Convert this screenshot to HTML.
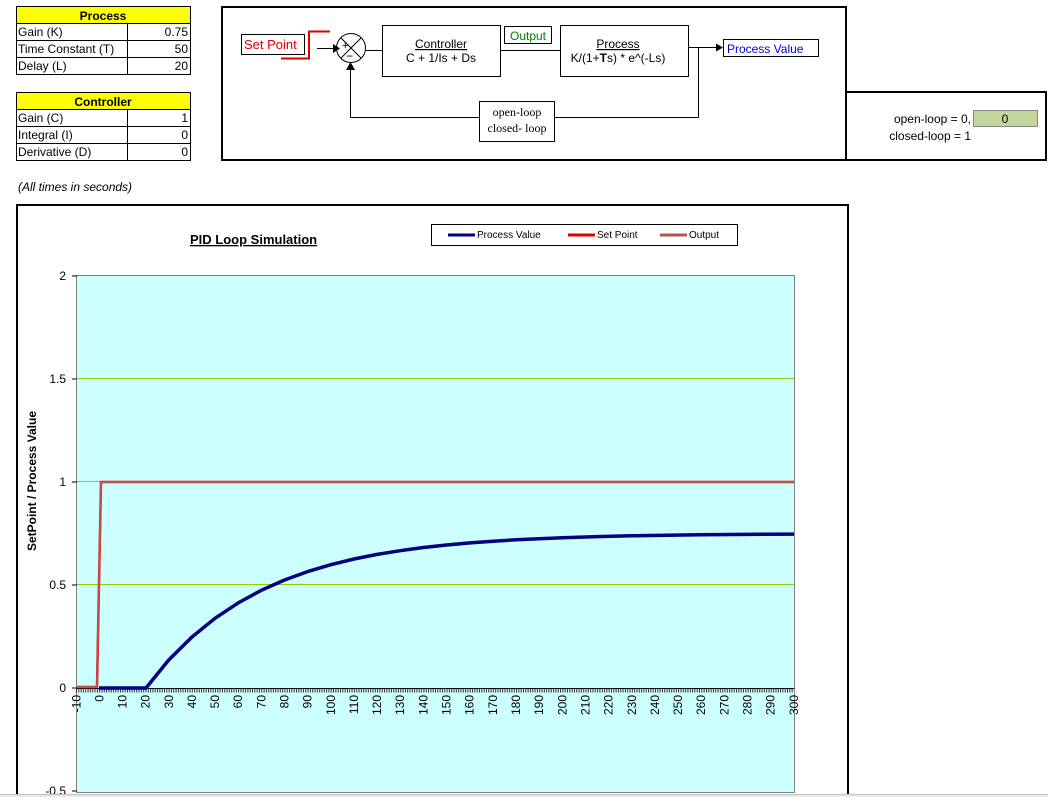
<!DOCTYPE html>
<html><head><meta charset="utf-8"><style>
body{margin:0;background:#fff;width:1048px;height:797px;overflow:hidden;font-family:"Liberation Sans",Arial,sans-serif}
svg text{font-family:"Liberation Sans",Arial,sans-serif}
</style></head><body>
<svg width="1048" height="797" viewBox="0 0 1048 797" xmlns="http://www.w3.org/2000/svg">
<!-- Process table -->
<rect x="16.5" y="6.5" width="174" height="17" fill="#ffff00" stroke="#000"/>
<text x="103" y="20" font-size="12" font-weight="bold" text-anchor="middle">Process</text>
<g stroke="#000" fill="none">
<rect x="16.5" y="23.5" width="174" height="51"/>
<line x1="16" y1="40.5" x2="191" y2="40.5"/><line x1="16" y1="57.5" x2="191" y2="57.5"/>
<line x1="127.5" y1="23" x2="127.5" y2="75"/>
</g>
<g font-size="12">
<text x="18" y="36">Gain (K)</text><text x="188" y="36" text-anchor="end">0.75</text>
<text x="18" y="53">Time Constant (T)</text><text x="188" y="53" text-anchor="end">50</text>
<text x="18" y="70">Delay (L)</text><text x="188" y="70" text-anchor="end">20</text>
</g>
<!-- Controller table -->
<rect x="16.5" y="92.5" width="174" height="17" fill="#ffff00" stroke="#000"/>
<text x="103" y="106" font-size="12" font-weight="bold" text-anchor="middle">Controller</text>
<g stroke="#000" fill="none">
<rect x="16.5" y="109.5" width="174" height="51"/>
<line x1="16" y1="126.5" x2="191" y2="126.5"/><line x1="16" y1="143.5" x2="191" y2="143.5"/>
<line x1="127.5" y1="109" x2="127.5" y2="161"/>
</g>
<g font-size="12">
<text x="18" y="122">Gain (C)</text><text x="188" y="122" text-anchor="end">1</text>
<text x="18" y="139">Integral (I)</text><text x="188" y="139" text-anchor="end">0</text>
<text x="18" y="156">Derivative (D)</text><text x="188" y="156" text-anchor="end">0</text>
</g>
<text x="18" y="191" font-size="12" font-style="italic">(All times in seconds)</text>

<!-- Diagram -->
<rect x="222" y="7" width="624" height="153" fill="none" stroke="#000" stroke-width="2"/>
<rect x="846" y="92" width="200" height="68" fill="none" stroke="#000" stroke-width="2"/>
<rect x="973.5" y="110.5" width="64" height="16" fill="#c3d69b" stroke="#888"/>
<text x="1005" y="123" font-size="12" text-anchor="middle">0</text>
<text x="971" y="123" font-size="12" text-anchor="end">open-loop = 0,</text>
<text x="971" y="140" font-size="12" text-anchor="end">closed-loop = 1</text>

<rect x="241.5" y="34.5" width="63" height="20" fill="#fff" stroke="#000"/>
<text x="244" y="49" font-size="13" fill="#e00000">Set Point</text>
<polyline points="281,58.5 309,58.5 309,31.5 330,31.5" fill="none" stroke="#e00000" stroke-width="2"/>
<g stroke="#000" fill="none">
<line x1="317" y1="48.5" x2="333" y2="48.5"/>
<circle cx="351" cy="48" r="14.5" fill="#fff"/>
<line x1="341" y1="38" x2="361" y2="58"/><line x1="361" y1="38" x2="341" y2="58"/>
<line x1="366" y1="50.5" x2="382" y2="50.5"/>
<rect x="382.5" y="25.5" width="118" height="51" fill="#fff"/>
<line x1="500" y1="50.5" x2="560" y2="50.5"/>
<rect x="560.5" y="25.5" width="128" height="51" fill="#fff"/>
<line x1="688" y1="47.5" x2="716" y2="47.5"/>
<line x1="698.5" y1="47" x2="698.5" y2="117.5"/>
<line x1="698.5" y1="117.5" x2="555" y2="117.5"/>
<line x1="479" y1="117.5" x2="350.5" y2="117.5"/>
<line x1="350.5" y1="117.5" x2="350.5" y2="70"/>
</g>
<polygon points="333,44 340,48.5 333,53" fill="#000"/>
<polygon points="346,70 350.5,62 355,70" fill="#000"/>
<polygon points="716,43.5 723,47.5 716,51.5" fill="#000"/>
<text x="342" y="49" font-size="11">+</text>
<text x="346" y="60" font-size="12">−</text>
<text x="441" y="48" font-size="12" text-anchor="middle" text-decoration="underline">Controller</text>
<text x="441" y="62" font-size="12" text-anchor="middle">C + 1/Is + Ds</text>
<rect x="504.5" y="26.5" width="47" height="17" fill="#fff" stroke="#000"/>
<text x="528" y="40" font-size="12" fill="#008000" text-anchor="middle">Output</text>
<text x="618" y="48" font-size="12" text-anchor="middle" text-decoration="underline">Process</text>
<text x="618" y="62" font-size="12" text-anchor="middle">K/(1+<tspan font-weight="bold">T</tspan>s) * e^(-Ls)</text>
<rect x="723.5" y="39.5" width="95" height="17" fill="#fff" stroke="#000"/>
<text x="727" y="53" font-size="12" fill="#0000cc">Process Value</text>
<rect x="479.5" y="101.5" width="75" height="40" fill="#fff" stroke="#000"/>
<text x="517" y="116" font-size="12" text-anchor="middle" font-family="Liberation Serif" style="font-family:'Liberation Serif',serif">open-loop</text>
<text x="517" y="132" font-size="12" text-anchor="middle" style="font-family:'Liberation Serif',serif">closed- loop</text>

<!-- Chart -->
<rect x="17" y="205" width="831" height="600" fill="#fff" stroke="#000" stroke-width="2"/>
<text x="190" y="244" font-size="13" font-weight="bold" text-decoration="underline">PID Loop Simulation</text>
<rect x="431.5" y="224.5" width="306" height="21" fill="#fff" stroke="#000"/>
<line x1="448" y1="235" x2="475" y2="235" stroke="#000080" stroke-width="3"/>
<text x="477" y="238" font-size="10">Process Value</text>
<line x1="568" y1="235" x2="595" y2="235" stroke="#e00000" stroke-width="3"/>
<text x="597" y="238" font-size="10">Set Point</text>
<line x1="660" y1="235" x2="687" y2="235" stroke="#c0504d" stroke-width="3"/>
<text x="689" y="238" font-size="10">Output</text>

<rect x="76.5" y="275.5" width="718" height="517" fill="#ccffff" stroke="#808080"/>
<g stroke="#99cc00">
<line x1="77" y1="378.5" x2="794" y2="378.5"/>
<line x1="77" y1="481.5" x2="794" y2="481.5"/>
<line x1="77" y1="584.5" x2="794" y2="584.5"/>
</g>
<g stroke="#000">
<line x1="72" y1="276" x2="77" y2="276"/><line x1="72" y1="379" x2="77" y2="379"/>
<line x1="72" y1="482" x2="77" y2="482"/><line x1="72" y1="585" x2="77" y2="585"/>
<line x1="72" y1="688" x2="77" y2="688"/><line x1="72" y1="791" x2="77" y2="791"/>
<line x1="76" y1="688.5" x2="794" y2="688.5"/>
<line x1="76" y1="690.5" x2="794" y2="690.5" stroke-width="4" stroke-dasharray="1 1.316" stroke="#333"/>
</g>
<g font-size="12" text-anchor="end">
<text x="66" y="280">2</text><text x="66" y="383">1.5</text><text x="66" y="486">1</text>
<text x="66" y="589">0.5</text><text x="66" y="692">0</text><text x="66" y="795">-0.5</text>
</g>
<text transform="translate(36,481) rotate(-90)" font-size="12" font-weight="bold" text-anchor="middle">SetPoint / Process Value</text>
<g font-size="12" text-anchor="end" id="xl">
<text transform="translate(80.5,695) rotate(-90)">-10</text>
<text transform="translate(103.5,695) rotate(-90)">0</text>
<text transform="translate(126.5,695) rotate(-90)">10</text>
<text transform="translate(149.5,695) rotate(-90)">20</text>
<text transform="translate(173,695) rotate(-90)">30</text>
<text transform="translate(196,695) rotate(-90)">40</text>
<text transform="translate(219,695) rotate(-90)">50</text>
<text transform="translate(242,695) rotate(-90)">60</text>
<text transform="translate(265.5,695) rotate(-90)">70</text>
<text transform="translate(288.5,695) rotate(-90)">80</text>
<text transform="translate(311.5,695) rotate(-90)">90</text>
<text transform="translate(335,695) rotate(-90)">100</text>
<text transform="translate(358,695) rotate(-90)">110</text>
<text transform="translate(381,695) rotate(-90)">120</text>
<text transform="translate(404,695) rotate(-90)">130</text>
<text transform="translate(427.5,695) rotate(-90)">140</text>
<text transform="translate(450.5,695) rotate(-90)">150</text>
<text transform="translate(473.5,695) rotate(-90)">160</text>
<text transform="translate(497,695) rotate(-90)">170</text>
<text transform="translate(520,695) rotate(-90)">180</text>
<text transform="translate(543,695) rotate(-90)">190</text>
<text transform="translate(566.5,695) rotate(-90)">200</text>
<text transform="translate(589.5,695) rotate(-90)">210</text>
<text transform="translate(612.5,695) rotate(-90)">220</text>
<text transform="translate(636,695) rotate(-90)">230</text>
<text transform="translate(659,695) rotate(-90)">240</text>
<text transform="translate(682,695) rotate(-90)">250</text>
<text transform="translate(705,695) rotate(-90)">260</text>
<text transform="translate(728.5,695) rotate(-90)">270</text>
<text transform="translate(751.5,695) rotate(-90)">280</text>
<text transform="translate(774.5,695) rotate(-90)">290</text>
<text transform="translate(798,695) rotate(-90)">300</text>
</g>
<!-- series -->
<polyline points="77,687 97,687 101,482 794,482" fill="none" stroke="#e00000" stroke-width="2.5"/>
<polyline points="77,687 97,687 101,482 794,482" fill="none" stroke="#c0504d" stroke-width="2"/>
<polyline points="99,688 146,688 168.7,660 191.8,637.1 215,618.3 238.2,602.9 261.3,590.3 284.5,580 307.6,571.6 330.8,564.7 354,559 377.1,554.4 400.3,550.7 423.4,547.5 446.6,545 469.8,542.9 493,541.2 516.1,539.8 539.2,538.7 562.4,537.7 597,536.6 631.9,535.8 666.6,535.2 701.4,534.8 747.7,534.4 794,534.1" fill="none" stroke="#000080" stroke-width="3.5" stroke-linejoin="round"/>
<!-- bottom strip -->
<rect x="0" y="794" width="1048" height="3" fill="#e8e8e8"/>
<line x1="0" y1="794.5" x2="1048" y2="794.5" stroke="#c0c0c0"/>
</svg>
</body></html>
